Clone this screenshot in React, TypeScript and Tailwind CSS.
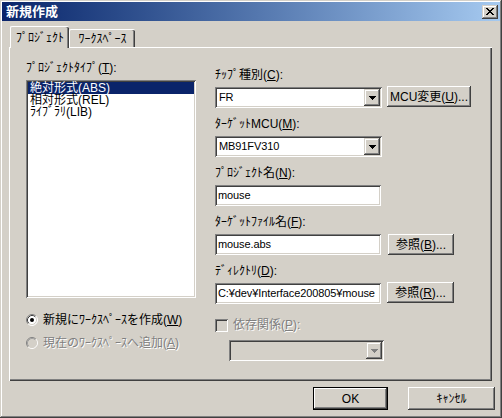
import React from 'react';

const SUNKEN =
  'shadow-[inset_1px_1px_0_#808080,inset_-1px_-1px_0_#ffffff,inset_2px_2px_0_#404040,inset_-2px_-2px_0_#d4d0c8]';
const RAISED =
  'shadow-[inset_-1px_-1px_0_#404040,inset_1px_1px_0_#ffffff,inset_-2px_-2px_0_#808080,inset_2px_2px_0_#d4d0c8]';
const ARROW_BTN =
  'shadow-[inset_-1px_-1px_0_#404040,inset_1px_1px_0_#d4d0c8,inset_-2px_-2px_0_#808080,inset_2px_2px_0_#ffffff]';
const DISABLED_TEXT = 'text-[#808080] [text-shadow:1px_1px_0_#ffffff]';
const VALUE_FONT = "font-['Liberation_Sans',sans-serif] text-[11px] tracking-[-0.1px]";

const Label: React.FC<{ text: string; mn: string; tail?: string }> = ({ text, mn, tail = '):' }) => (
  <div className="h-[20px] leading-[16px] whitespace-nowrap">
    {text}(<u>{mn}</u>{tail}
  </div>
);

const Combo: React.FC<{ value?: string; width: string; disabled?: boolean }> = ({ value, width, disabled }) => (
  <div className={`flex h-[21px] p-[2px] ${width} ${disabled ? 'bg-[#d4d0c8]' : 'bg-white'} ${SUNKEN}`}>
    <div className={`flex-1 overflow-hidden whitespace-nowrap pl-[2px] leading-[17px] ${VALUE_FONT}`}>{value}</div>
    <div className={`flex h-[17px] w-[16px] items-center justify-center bg-[#d4d0c8] ${ARROW_BTN}`}>
      <svg width="7" height="4" viewBox="0 0 7 4" shapeRendering="crispEdges">
        <polygon points="0,0 7,0 3.5,4" fill={disabled ? '#808080' : '#000000'} />
      </svg>
    </div>
  </div>
);

const Field: React.FC<{ value: string }> = ({ value }) => (
  <div
    className={`h-[21px] w-[166px] overflow-hidden whitespace-nowrap bg-white pl-[3px] pr-[1px] leading-[21px] ${VALUE_FONT} ${SUNKEN}`}
  >
    {value}
  </div>
);

const Button: React.FC<{ width: string; children: React.ReactNode; isDefault?: boolean }> = ({
  width,
  children,
  isDefault,
}) => (
  <div
    className={`flex items-center justify-center bg-[#d4d0c8] leading-[16px] whitespace-nowrap ${width} ${
      isDefault ? 'h-[23px] border border-black' : 'h-[21px]'
    } ${RAISED}`}
  >
    {children}
  </div>
);

const Radio: React.FC<{ checked?: boolean; disabled?: boolean }> = ({ checked, disabled }) => (
  <svg width="12" height="12" viewBox="0 0 12 12">
    <circle cx="6" cy="6" r="5" fill={disabled ? '#d4d0c8' : '#ffffff'} />
    <path d="M2.11 9.89A5.5 5.5 0 0 1 9.89 2.11" stroke="#808080" fill="none" />
    <path d="M9.89 2.11A5.5 5.5 0 0 1 2.11 9.89" stroke="#ffffff" fill="none" />
    <path d="M2.82 9.18A4.5 4.5 0 0 1 9.18 2.82" stroke={disabled ? '#a0a0a0' : '#404040'} fill="none" />
    <path d="M9.18 2.82A4.5 4.5 0 0 1 2.82 9.18" stroke="#d4d0c8" fill="none" />
    {checked && <circle cx="6" cy="6" r="2" fill="#000000" />}
  </svg>
);

export default function App() {
  return (
    <div
      className={`flex h-[418px] w-[502px] flex-col bg-[#d4d0c8] p-[2px] font-['Liberation_Sans','Noto_Sans_CJK_JP',sans-serif] text-[12px] text-black shadow-[inset_-1px_-1px_0_#404040,inset_1px_1px_0_#d4d0c8,inset_-2px_-2px_0_#808080,inset_2px_2px_0_#ffffff]`}
    >
      {/* Title bar */}
      <div className="flex h-[19px] items-center bg-linear-to-r from-[#0a246a] to-[#a6caf0] pl-[4px] pr-[2px]">
        <span className="text-[13px] leading-[19px] font-bold text-white">新規作成</span>
        <div className={`ml-auto flex h-[14px] w-[16px] items-center justify-center bg-[#d4d0c8] ${ARROW_BTN}`}>
          <svg width="8" height="7" viewBox="0 0 8 7" shapeRendering="crispEdges">
            <path d="M0 0h2l2 2.5L6 0h2L5 3.5 8 7H6L4 4.5 2 7H0l3-3.5z" fill="#000000" />
          </svg>
        </div>
      </div>

      {/* Tabs */}
      <div className="flex h-[26px] items-end pl-[8px]">
        <div className="relative z-10 -mb-[1px] flex h-[22px] w-[59px] items-start justify-center rounded-t-[2px] border-l border-t border-white bg-[#d4d0c8] pt-[3px] leading-[16px] shadow-[inset_-1px_0_0_#404040,inset_-2px_0_0_#808080]">
          ﾌﾟﾛｼﾞｪｸﾄ
        </div>
        <div className="flex h-[18px] w-[66px] items-start justify-center rounded-t-[2px] border-l border-t border-white bg-[#d4d0c8] pt-[1px] leading-[16px] shadow-[inset_-1px_0_0_#404040,inset_-2px_0_0_#808080]">
          ﾜｰｸｽﾍﾟｰｽ
        </div>
      </div>

      {/* Tab panel */}
      <div className="ml-[7px] flex h-[334px] w-[483px] border-l border-t border-white pl-[16px] pt-[12px] shadow-[inset_-1px_-1px_0_#404040,inset_-2px_-2px_0_#808080]">
        {/* Left column */}
        <div className="flex w-[170px] flex-col">
          <Label text="ﾌﾟﾛｼﾞｪｸﾄﾀｲﾌﾟ" mn="T" />
          <div className={`h-[218px] w-[170px] bg-white p-[2px] ${SUNKEN}`}>
            <div className="h-[12px] bg-[#0a246a] pl-[2px] leading-[12px] text-white">絶対形式(ABS)</div>
            <div className="h-[12px] pl-[2px] leading-[12px]">相対形式(REL)</div>
            <div className="h-[12px] pl-[2px] leading-[12px]">ﾗｲﾌﾞﾗﾘ(LIB)</div>
          </div>
          <div className="mt-[15px] flex h-[14px] items-center gap-[5px] whitespace-nowrap leading-[14px]">
            <Radio checked />
            <span>
              新規にﾜｰｸｽﾍﾟｰｽを作成(<u>W</u>)
            </span>
          </div>
          <div className="mt-[9px] flex h-[14px] items-center gap-[5px] whitespace-nowrap leading-[14px]">
            <Radio disabled />
            <span className={DISABLED_TEXT}>
              現在のﾜｰｸｽﾍﾟｰｽへ追加(<u>A</u>)
            </span>
          </div>
        </div>

        {/* Right column */}
        <div className="ml-[19px] flex flex-col pt-[7px]">
          <Label text="ﾁｯﾌﾟ種別" mn="C" />
          <div className="flex items-start">
            <Combo value="FR" width="w-[167px]" />
            <div className="ml-[5px] -mt-[1px]">
              <Button width="w-[84px]">
                MCU変更(<u>U</u>)...
              </Button>
            </div>
          </div>

          <div className="mt-[8px]">
            <Label text="ﾀｰｹﾞｯﾄMCU" mn="M" />
            <Combo value="MB91FV310" width="w-[167px]" />
          </div>

          <div className="mt-[8px]">
            <Label text="ﾌﾟﾛｼﾞｪｸﾄ名" mn="N" />
            <Field value="mouse" />
          </div>

          <div className="mt-[8px]">
            <Label text="ﾀｰｹﾞｯﾄﾌｧｲﾙ名" mn="F" />
            <div className="flex items-start">
              <Field value="mouse.abs" />
              <div className="ml-[7px]">
                <Button width="w-[66px]">
                  参照(<u>B</u>)...
                </Button>
              </div>
            </div>
          </div>

          <div className="mt-[8px]">
            <Label text="ﾃﾞｨﾚｸﾄﾘ" mn="D" />
            <div className="flex items-start">
              <Field value="C:¥dev¥Interface200805¥mouse" />
              <div className="ml-[6px] -mt-[1px]">
                <Button width="w-[67px]">
                  参照(<u>R</u>)...
                </Button>
              </div>
            </div>
          </div>

          <div className="mt-[14px] flex h-[14px] items-center gap-[5px] whitespace-nowrap leading-[14px]">
            <div className={`h-[13px] w-[13px] bg-[#d4d0c8] ${SUNKEN}`} />
            <span className={DISABLED_TEXT}>
              依存関係(<u>P</u>):
            </span>
          </div>

          <div className="ml-[14px] mt-[8px]">
            <Combo width="w-[155px]" disabled />
          </div>
        </div>
      </div>

      {/* Dialog buttons */}
      <div className="mt-[6px] flex justify-end gap-[20px] pr-[5px]">
        <Button width="w-[75px]" isDefault>
          OK
        </Button>
        <div
          className={`flex h-[23px] w-[87px] items-center justify-center bg-[#d4d0c8] leading-[16px] ${RAISED}`}
        >
          ｷｬﾝｾﾙ
        </div>
      </div>
    </div>
  );
}
